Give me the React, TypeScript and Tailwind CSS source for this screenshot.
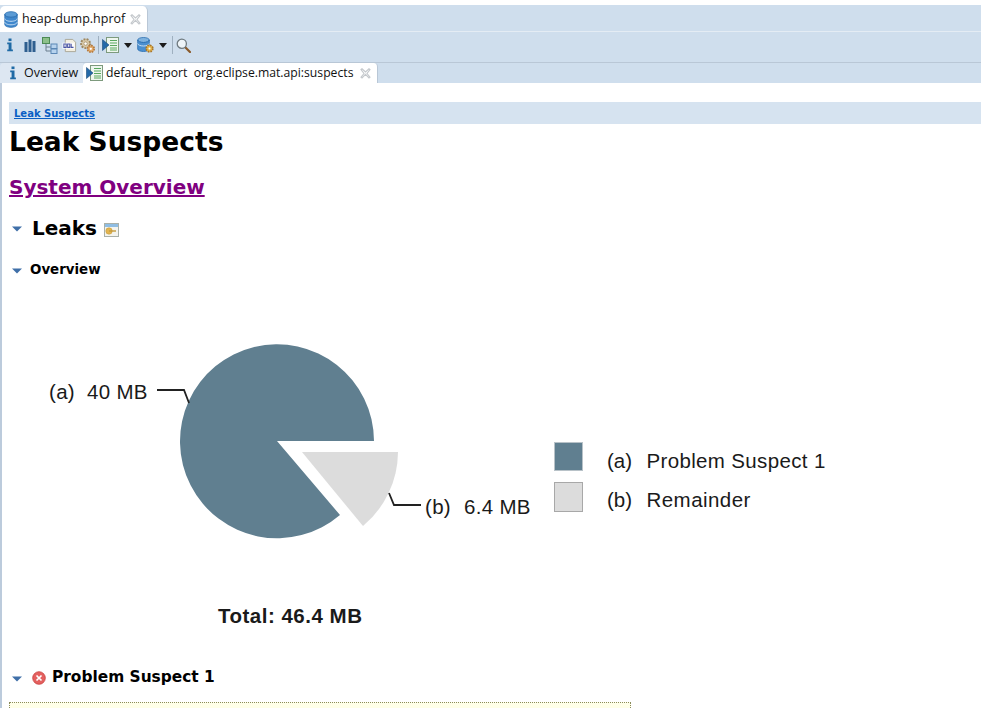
const BODY_FONT = "font-['Open_Sans','Noto_Sans',sans-serif]";
const HEAD_FONT = "font-['DejaVu_Sans',Verdana,sans-serif]";

function Twisty({ className = "" }: { className?: string }) {
  return (
    <svg width="10" height="6" viewBox="0 0 10 6" className={`shrink-0 ${className}`}>
      <path d="M0 0.5h10L5 5.5z" fill="#3f6fa8" />
    </svg>
  );
}

function CloseIcon() {
  return (
    <svg width="11" height="11" viewBox="0 0 11 11" fill="none" stroke="#c4c8cc" strokeWidth="1.1" className="shrink-0">
      <path d="M1 1.5 2 .8 5.500 4 9 .8l1 .7L7 5.500l3 3.700-1 .8-3.500-3.600L2 10l-1-.8L4 5.500z" />
    </svg>
  );
}

function DbIcon() {
  return (
    <svg width="14" height="17" viewBox="0 0 14 17" className="shrink-0">
      <ellipse cx="7" cy="3.500" rx="6.200" ry="2.800" fill="#5b9bd5" stroke="#2a6db0" strokeWidth=".8" />
      <path d="M.8 3.500v10c0 1.600 2.800 2.800 6.200 2.800s6.200-1.200 6.200-2.800v-10c0 1.600-2.800 2.800-6.200 2.800S.8 5.100.8 3.500z" fill="#3f87cc" stroke="#2a6db0" strokeWidth=".8" />
      <path d="M.8 7.500c0 1.600 2.800 2.800 6.200 2.800s6.200-1.200 6.200-2.800M.8 11c0 1.600 2.800 2.800 6.200 2.800s6.200-1.200 6.200-2.800" fill="none" stroke="#cfe3f5" strokeWidth=".9" />
    </svg>
  );
}

function InfoIcon() {
  return (
    <svg width="8" height="14" viewBox="0 0 8 14" className="shrink-0">
      <rect x="2.500" y="0.500" width="3" height="2.600" fill="#1f6aa5" />
      <path d="M1.200 4.600h4.300v7h1.400v1.600H1.200v-1.600h1.400V6.200H1.200z" fill="#1f6aa5" />
    </svg>
  );
}

function HistogramIcon() {
  return (
    <svg width="12" height="13" viewBox="0 0 12 13" className="block">
      <rect x="0.500" y="3" width="3" height="10" fill="#2f5f8f" />
      <rect x="4.500" y="0.500" width="3" height="12.500" fill="#2f5f8f" />
      <rect x="8.500" y="2" width="3" height="11" fill="#2f5f8f" />
    </svg>
  );
}

function TreeIcon() {
  return (
    <svg width="17" height="17" viewBox="0 0 17 17" className="block">
      <path d="M4 6v8h5M4 10h5" fill="none" stroke="#6b7f8f" />
      <rect x="0.500" y="0.500" width="7" height="6" fill="#8cc08a" stroke="#4c8a55" />
      <rect x="9" y="7" width="6" height="4.500" fill="#b7d3ee" stroke="#5b87b5" />
      <rect x="9" y="12" width="6" height="4.500" fill="#b7d3ee" stroke="#5b87b5" />
    </svg>
  );
}

function OqlIcon() {
  return (
    <svg width="15" height="15" viewBox="0 0 16 16" className="block">
      <path d="M3.500 1.500h8l3 3v10h-11z" fill="#f3efe2" stroke="#a9a595" />
      <rect x="0.500" y="5" width="13" height="6.500" fill="#fff" opacity=".85" />
      <path d="M2 6.500h2.500v3.500H2zM6 6.500h2.300v3.500H6zM9.800 6v4h2.500" fill="none" stroke="#4a55a5" strokeWidth="1.100" />
    </svg>
  );
}

function GearsIcon() {
  return (
    <svg width="17" height="17" viewBox="0 0 18 18" className="block">
      <circle cx="7" cy="7" r="4.800" fill="#d8c9a8" stroke="#9c8660" strokeWidth="2" strokeDasharray="2 1.300" />
      <circle cx="7" cy="7" r="1.800" fill="#fff" stroke="#9c8660" strokeWidth=".7" />
      <circle cx="12.500" cy="12.500" r="3.600" fill="#e0a96a" stroke="#b5793c" strokeWidth="1.800" strokeDasharray="1.700 1.100" />
      <circle cx="12.500" cy="12.500" r="1.200" fill="#fff" />
    </svg>
  );
}

function ReportIcon() {
  return (
    <svg width="17" height="16" viewBox="0 0 17 16" className="block shrink-0">
      <rect x="4.500" y="0.500" width="12" height="15" fill="#eef6ee" stroke="#7d9a7d" />
      <path d="M8 3.500h7M8 6h7M8 8.500h7M8 11h7M8 13h7" stroke="#58a85e" strokeWidth="1.200" />
      <path d="M0.500 2.500 7 8l-6.500 5.500z" fill="#2469a8" stroke="#17497a" strokeWidth=".6" />
    </svg>
  );
}

function DbGearIcon() {
  return (
    <svg width="18" height="17" viewBox="0 0 18 17" className="block">
      <ellipse cx="6.500" cy="3" rx="5.800" ry="2.500" fill="#7fb2de" stroke="#2a6db0" strokeWidth=".8" />
      <path d="M.7 3v9c0 1.400 2.600 2.500 5.800 2.500s5.800-1.100 5.800-2.500V3c0 1.400-2.600 2.500-5.800 2.500S.7 4.400.7 3z" fill="#4a8fd0" stroke="#2a6db0" strokeWidth=".8" />
      <path d="M.7 6.500c0 1.400 2.600 2.500 5.800 2.500s5.800-1.100 5.800-2.500" fill="none" stroke="#d5e6f5" strokeWidth=".9" />
      <circle cx="12.500" cy="11.500" r="3.300" fill="#e8b84e" stroke="#a8762a" strokeWidth="1.700" strokeDasharray="1.600 1" />
      <circle cx="12.500" cy="11.500" r="1" fill="#fff" />
    </svg>
  );
}

function SearchIcon() {
  return (
    <svg width="15" height="15" viewBox="0 0 15 15" className="block">
      <path d="m9 9 5 5" stroke="#8a5a2b" strokeWidth="2.200" strokeLinecap="round" />
      <circle cx="5.800" cy="5.800" r="4.600" fill="#eef4f8" stroke="#6f7a80" strokeWidth="1.300" />
    </svg>
  );
}

function ToolbarArrow() {
  return (
    <svg width="8" height="5" viewBox="0 0 8 5" className="block">
      <path d="M0 0h8L4 5z" fill="#1b1b1b" />
    </svg>
  );
}

function SectionIcon() {
  return (
    <svg width="15" height="14" viewBox="0 0 15 14" className="block">
      <rect x="0.500" y="0.500" width="14" height="13" fill="#f4f4ee" stroke="#a9b0a9" />
      <rect x="1" y="1" width="13" height="3" fill="#8fbde3" />
      <circle cx="5" cy="8" r="3.200" fill="#e3b54f" stroke="#c49a3c" strokeWidth=".6" />
      <path d="M5 8h7" stroke="#c49a3c" strokeWidth="1.400" />
    </svg>
  );
}

function ErrorIcon() {
  return (
    <svg width="14" height="14" viewBox="0 0 14 14" className="block">
      <circle cx="7" cy="7" r="6.300" fill="#e4605f" stroke="#c9413f" strokeWidth=".8" />
      <path d="m4.500 4.500 5 5m0-5-5 5" stroke="#fff" strokeWidth="1.700" />
    </svg>
  );
}

function PieChart() {
  return (
    <svg width="981" height="368" viewBox="0 0 981 368" className="block">
      {/* svg top sits at page y 285, so the numbers below are page coordinates */}
      <g transform="translate(0 -285)" fontFamily="'Liberation Sans', Arial, sans-serif" fill="#1a1a1a">
        <path d="M277 441 L374 441 A97 97 0 1 0 340 515 Z" fill="#607f90" />
        <path d="M302 452 L398 452 A97 97 0 0 1 363 526 Z" fill="#dcdcdc" />
        <path d="M157 390 H184 L189 403" fill="none" stroke="#222" strokeWidth="1.800" />
        <path d="M389 493 L394 505 H421" fill="none" stroke="#222" strokeWidth="1.800" />
        <text x="49" y="399" fontSize="20.500" letterSpacing=".3">(a)</text>
        <text x="87" y="399" fontSize="20.500" letterSpacing=".3">40 MB</text>
        <text x="425" y="514" fontSize="20.500" letterSpacing=".3">(b)</text>
        <text x="464" y="514" fontSize="20.500" letterSpacing=".3">6.4 MB</text>
        <text x="218" y="623" fontSize="20.500" fontWeight="700" letterSpacing=".5">Total: 46.4 MB</text>
        <rect x="554.500" y="442.500" width="28" height="28" fill="#607f90" stroke="#b8c2c8" />
        <rect x="554.500" y="482.500" width="28" height="29" fill="#dcdcdc" stroke="#a8a8a8" />
        <text x="607" y="468" fontSize="20.500">(a)</text>
        <text x="646.500" y="468" fontSize="20.500" letterSpacing=".35">Problem Suspect 1</text>
        <text x="607" y="507" fontSize="20.500">(b)</text>
        <text x="646.500" y="507" fontSize="20.500" letterSpacing=".45">Remainder</text>
      </g>
    </svg>
  );
}

export default function App() {
  return (
    <div className="h-[708px] w-[981px] overflow-hidden bg-white flex flex-col">
      {/* editor tab */}
      <div className={`h-[32px] pt-[5px] bg-white ${BODY_FONT}`}>
        <div className="h-[27px] bg-[#cfdeed] flex items-end border-b border-[#e4ecf4]">
          <div className="h-[26px] w-[148px] bg-white rounded-t-[5px] border-r border-[#b9c7d6] flex items-center pl-[4px] text-[12.500px] text-[#111] -mb-px whitespace-nowrap">
            <DbIcon />
            <span className="ml-[4px]">heap-dump.hprof</span>
            <span className="ml-[5px]"><CloseIcon /></span>
          </div>
        </div>
      </div>

      {/* toolbar */}
      <div className="h-[30px] bg-[#cfdeed] flex items-center pl-[6px] pb-[4px]">
        <InfoIcon />
        <span className="ml-[10px]"><HistogramIcon /></span>
        <span className="ml-[6px]"><TreeIcon /></span>
        <span className="ml-[3px]"><OqlIcon /></span>
        <span className="ml-[2px]"><GearsIcon /></span>
        <span className="ml-[2px] h-[18px] w-px bg-[#9fb0c0]" />
        <span className="ml-[3px]"><ReportIcon /></span>
        <span className="ml-[5px]"><ToolbarArrow /></span>
        <span className="ml-[5px]"><DbGearIcon /></span>
        <span className="ml-[4px]"><ToolbarArrow /></span>
        <span className="ml-[5px] h-[18px] w-px bg-[#9fb0c0]" />
        <span className="ml-[3px]"><SearchIcon /></span>
      </div>

      {/* report tabs */}
      <div className={`h-[21px] bg-[#cfdeed] border-t border-[#b9c7d6] flex items-end text-[12.200px] text-[#111] ${BODY_FONT}`}>
        <div className="h-[20px] w-[83px] flex items-center pl-[9px] bg-[#dde7f2] rounded-tl-[4px] whitespace-nowrap">
          <InfoIcon />
          <span className="ml-[7px] text-[12.500px]">Overview</span>
        </div>
        <div className="h-[20px] w-[295px] bg-white rounded-t-[4px] border-r border-[#b9c7d6] flex items-center pl-[3px] whitespace-nowrap">
          <ReportIcon />
          <span className="ml-[3px] whitespace-pre">default_report  org.eclipse.mat.api:suspects</span>
          <span className="ml-[7px]"><CloseIcon /></span>
        </div>
      </div>

      {/* report body */}
      <div className={`flex-1 border-l-[2px] border-[#bccbdc] pt-[19px] pl-[7px] overflow-hidden ${HEAD_FONT}`}>
        <div className="h-[22px] bg-[#d6e3f0] flex items-center pl-[5px] pt-[1px]">
          <a className="text-[10px] font-bold underline text-[#0a5fc4]">Leak Suspects</a>
        </div>
        <h1 className="mt-[1px] text-[26.500px] leading-[34px] font-bold text-black">Leak Suspects</h1>
        <h2 className="mt-[15px] text-[20px] leading-[26px] font-bold underline text-[#800080]">System Overview</h2>
        <div className="mt-[14px] h-[28px] flex items-center">
          <Twisty className="ml-[3px] mt-[2px]" />
          <span className="ml-[10px] text-[20px] font-bold text-black">Leaks</span>
          <span className="ml-[7px] mt-[3px]"><SectionIcon /></span>
        </div>
        <div className="mt-[20px] h-[16px] flex items-center">
          <Twisty className="ml-[3px] mt-[2px]" />
          <span className="ml-[8px] text-[13.400px] font-bold text-black">Overview</span>
        </div>
        <div className="-ml-[9px] mt-[7px]"><PieChart /></div>
        <div className="mt-[16px] h-[18px] flex items-center">
          <Twisty className="ml-[3px] mt-[2px]" />
          <span className="ml-[10px]"><ErrorIcon /></span>
          <span className="ml-[6px] text-[15.400px] font-bold text-black">Problem Suspect 1</span>
        </div>
        <div className="mt-[15px] w-[622px] h-[10px] bg-[#ffffe8] border border-dotted border-[#8a8a5a]" />
      </div>
    </div>
  );
}
